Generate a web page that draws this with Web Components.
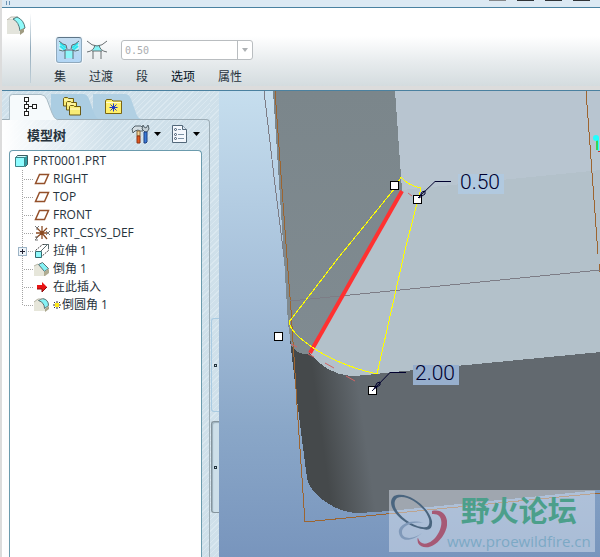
<!DOCTYPE html>
<html lang="zh-CN">
<head>
    <meta charset="UTF-8">
    <title>PRT0001</title>
    <style>
        html, body {
            margin: 0;
            height: 100%;
        }

        body {
            font: 12px/18px "Open Sans", "Noto Sans CJK SC", sans-serif;
            color: #26323c;
            background: #dcdcdc;
        }
    </style>
</head>
<body>
<cad-window></cad-window>

<template id="cad-window">
    <style>
        :host {
            display: flex;
            flex-direction: column;
            min-height: 100vh;
            box-sizing: border-box;
            padding-left: 2px;
        }

        main {
            display: flex;
            flex: 1;
            min-height: 0;
        }

        model-viewport {
            flex: 1;
            min-width: 0;
        }
    </style>
    <tool-strip></tool-strip>
    <feature-ribbon></feature-ribbon>
    <main>
        <side-panel></side-panel>
        <panel-sashes></panel-sashes>
        <model-viewport></model-viewport>
    </main>
</template>

<template id="tool-strip">
    <style>
        :host {
            display: flex;
            justify-content: space-between;
            height: 7px;
            padding: 0 10px 0 4px;
            background: #dce9f3;
            border-bottom: 1px solid #4a81a0;
        }

        .grip {
            width: 4px;
            height: 4px;
            margin-top: 1px;
            background: repeating-linear-gradient(90deg, #6b93b4 0 1px, transparent 1px 3px);
        }

        .keys {
            display: flex;
            gap: 11px;
        }

        .keys i {
            width: 17px;
            height: 1px;
            background: #303438;
        }

        .keys i:first-child {
            background: #85878a;
        }
    </style>
    <span class="grip"></span>
    <span class="keys"><i></i><i></i><i></i><i></i></span>
</template>

<template id="feature-ribbon">
    <style>
        :host {
            display: flex;
            height: 78px;
            background: linear-gradient(#fff 0 36%, #e8ecee 68%, #d4dcdf) content-box #eaf1f4;
            border-bottom: 1px solid #4a81a0;
            padding-bottom: 4px;
        }

        .feature {
            box-sizing: border-box;
            width: 28px;
            padding: 8px 0 0 4px;
        }

        .rule {
            width: 1px;
            margin: 5px 0 3px;
            background: linear-gradient(#fff, #8fa9ba 50%, #c2d0d9);
        }

        .dash {
            display: flex;
            flex-direction: column;
            padding: 29px 0 0 23px;
        }

        .row {
            display: flex;
            align-items: center;
            height: 28px;
            padding-left: 2px;
        }

        button {
            font: inherit;
            color: inherit;
            border: 0;
            padding: 0;
            background: none;
        }

        .tool {
            display: flex;
            align-items: center;
            justify-content: center;
            box-sizing: border-box;
            width: 26px;
            height: 26px;
            margin-right: 2px;
        }

        .tool[aria-pressed=true] {
            border: 1px solid #8fa9bd;
            border-top-color: #5e7587;
            border-radius: 3px;
            background: linear-gradient(#c3dcf0, #b2d6f5);
            box-shadow: 0 0 0 1px #f4f9fc;
        }

        value-combo {
            margin-left: 9px;
        }

        nav {
            display: flex;
            gap: 23px;
            margin-top: 5px;
        }

        nav .on {
            color: #00101c;
        }
    </style>
    <div class="feature"><ui-icon name="round" size="20"></ui-icon></div>
    <span class="rule"></span>
    <div class="dash">
        <div class="row">
            <button class="tool" aria-pressed="true" aria-label="集模式"><ui-icon name="sets" size="22"></ui-icon></button>
            <button class="tool" aria-pressed="false" aria-label="过渡模式"><ui-icon name="transition" size="22"></ui-icon></button>
            <value-combo value="0.50" label="半径"></value-combo>
        </div>
        <nav>
            <button>集</button>
            <button>过渡</button>
            <button>段</button>
            <button class="on">选项</button>
            <button>属性</button>
        </nav>
    </div>
</template>

<template id="value-combo">
    <style>
        :host {
            display: flex;
            box-sizing: border-box;
            width: 132px;
            height: 20px;
            border: 1px solid #b9bdc0;
            border-radius: 3px;
            background: #fff;
        }

        input {
            flex: 1;
            min-width: 0;
            border: 0;
            padding: 0 3px;
            background: none;
            font: 10px "DejaVu Sans Mono", monospace;
            color: #aaadb0;
        }

        button {
            width: 15px;
            border: 0;
            border-left: 1px solid #b9bdc0;
            padding: 0;
            background: none;
            display: flex;
            align-items: center;
            justify-content: center;
        }
    </style>
    <input disabled>
    <button disabled aria-label="展开"><svg width="6" height="4"><path d="M0 0h6L3 4z" fill="#adb1b4"/></svg></button>
</template>

<template id="side-panel">
    <style>
        :host {
            display: flex;
            flex-direction: column;
            width: 208px;
            background: repeating-linear-gradient(135deg, #cfe0ea 0 3px, #dae8f0 3px 4px);
        }

        .tabs {
            display: flex;
            padding: 3px 0 0 7px;
        }

        .tabs button {
            position: relative;
            width: 42px;
            height: 25px;
            border: 0;
            padding: 0;
            background: none;
        }

        .tabs svg {
            position: absolute;
            left: 0;
            top: 0;
            overflow: visible;
        }

        .tabs ui-icon {
            position: relative;
            margin-top: 2px;
        }

        .tabs button:nth-child(1) {
            z-index: 2;
        }

        .tabs button:nth-child(2) {
            z-index: 1;
        }

        .panel {
            display: flex;
            flex-direction: column;
            flex: 1;
            border: 1px solid #9cacb5;
            border-width: 1px 1px 0 0;
            border-radius: 0 4px 0 0;
            background: linear-gradient(90deg, #fff, rgba(255, 255, 255, 0) 52%);
        }

        header {
            display: flex;
            align-items: center;
            height: 30px;
            padding: 0 9px 0 25px;
        }

        h2 {
            flex: 1;
            margin: 0;
            font-size: 13px;
            line-height: 18px;
        }

        .menu {
            display: flex;
            align-items: center;
            gap: 4px;
            border: 0;
            padding: 0 0 3px;
            margin-left: 10px;
            background: none;
        }

        model-tree {
            flex: 1;
            margin: 0 7px;
        }
    </style>
    <div class="tabs" role="tablist">
        <button role="tab" aria-selected="true" aria-label="模型树">
            <svg width="55" height="26"><path d="M.5 26V3q0-2.500 3-2.500H32q4 0 6 5L43 19q2 6 6 7" fill="#f6fafc" stroke="#a9bbc5"/></svg>
            <ui-icon name="hierarchy" size="20"></ui-icon></button>
        <button role="tab" aria-label="文件夹浏览器">
            <svg width="55" height="26"><path d="M0 25V0H32q4 0 6 5L43 19q2 6 6 6" fill="#abcde2"/></svg>
            <ui-icon name="folders" size="20"></ui-icon></button>
        <button role="tab" aria-label="收藏夹">
            <svg width="55" height="26"><path d="M0 25V0H32q4 0 6 5L43 19q2 6 6 6" fill="#b1d0e3"/></svg>
            <ui-icon name="favorites" size="20"></ui-icon></button>
    </div>
    <section class="panel">
        <header>
            <h2>模型树</h2>
            <button class="menu" aria-label="设置"><ui-icon name="tools" size="20"></ui-icon><svg width="7" height="4"><path d="M0 0h7L3.500 4z"/></svg></button>
            <button class="menu" aria-label="显示"><ui-icon name="list" size="18"></ui-icon><svg width="7" height="4"><path d="M0 0h7L3.500 4z"/></svg></button>
        </header>
        <model-tree>
            <tree-row icon="part" root>PRT0001.PRT</tree-row>
            <tree-row icon="plane">RIGHT</tree-row>
            <tree-row icon="plane">TOP</tree-row>
            <tree-row icon="plane">FRONT</tree-row>
            <tree-row icon="csys">PRT_CSYS_DEF</tree-row>
            <tree-row icon="extrude" expandable>拉伸 1</tree-row>
            <tree-row icon="chamfer">倒角 1</tree-row>
            <tree-row icon="insert">在此插入</tree-row>
            <tree-row icon="fillet" last><ui-icon slot="mark" name="pending" size="9"></ui-icon>倒圆角 1</tree-row>
        </model-tree>
    </section>
</template>

<template id="model-tree">
    <style>
        :host {
            display: block;
            border: 1px solid #6b9bad;
            border-bottom: 0;
            border-radius: 4px 4px 0 0;
            padding-top: 1px;
            background: #fff;
        }
    </style>
    <slot></slot>
</template>

<template id="tree-row">
    <style>
        :host {
            display: flex;
            align-items: center;
            height: 18px;
            padding-left: 7px;
            white-space: nowrap;
        }

        :host([root]) {
            padding-left: 4px;
        }

        :host([root]) .rail {
            display: none;
        }

        .rail {
            flex: none;
        }

        .main {
            margin-right: 3px;
        }
    </style>
    <svg class="rail" width="17" height="18" shape-rendering="crispEdges"></svg>
    <ui-icon class="main" size="16"></ui-icon>
    <slot name="mark"></slot>
    <span><slot></slot></span>
</template>

<template id="panel-sashes">
    <style>
        :host {
            display: flex;
            flex-direction: column;
            align-items: flex-end;
            justify-content: flex-end;
            gap: 9px;
            box-sizing: border-box;
            width: 9px;
            padding-bottom: 44px;
            background: repeating-linear-gradient(135deg, #cfe0ea 0 3px, #dae8f0 3px 4px);
        }

        button {
            display: flex;
            align-items: center;
            justify-content: center;
            box-sizing: border-box;
            width: 8px;
            height: 94px;
            padding: 0;
            border: 1px solid #a9cbe2;
            border-right: 0;
            border-radius: 3px 0 0 3px;
            background: none;
        }

        button.open {
            height: 92px;
            border-color: #84949d;
            box-shadow: inset 1px 1px 1px #9cb0bc;
            background: #cddfe9;
        }

        button::before {
            content: "";
            width: 1px;
            height: 1px;
            border: 1px solid #24343e;
        }
    </style>
    <button aria-label="折叠导航器"></button>
    <button class="open" aria-label="折叠浏览器"></button>
</template>

<template id="model-viewport">
    <style>
        :host {
            display: block;
            position: relative;
            overflow: hidden;
            background: linear-gradient(#c6deee, #a3bdd8 45%, #8aa7c8 72%, #7895bd);
        }

        .scene {
            position: absolute;
            width: 100%;
            height: 100%;
        }

        forum-mark {
            position: absolute;
            right: 5px;
            bottom: 5px;
        }

        .dim {
            font: 300 21px Roboto, sans-serif;
            fill: #00002e;
        }
    </style>
    <svg class="scene" viewBox="219 91 381 466" preserveAspectRatio="xMinYMin slice">
        <defs>
            <linearGradient id="front" gradientUnits="userSpaceOnUse" x1="322" y1="440" x2="365" y2="434">
                <stop offset="0" stop-color="#45494b"/>
                <stop offset="1" stop-color="#62696f"/>
            </linearGradient>
            <linearGradient id="side" x1="0" y1="0" x2="0" y2="1">
                <stop offset="0" stop-color="#7b868b"/>
                <stop offset="1" stop-color="#808b91"/>
            </linearGradient>
        </defs>
        <!-- solid faces -->
        <g shape-rendering="crispEdges">
            <path d="M290 340L297 400 302 440 307 478Q309 487 317 495Q337 513 359 513L389 511 600 490V340L400 340z" fill="url(#front)"/>
            <path d="M395 91H601V352L384 373Q360 376 350 376C332 374 321 366 309 353L402 190z" fill="#b3c1ca"/>
            <path d="M395 91H601V170L402 190z" fill="#b8c5d0"/>
            <path d="M273 91H395L402 190 309 354Q297 355 291 345L288 323 284 258 277 152z" fill="url(#side)"/>
        </g>
        <!-- datum planes -->
        <g fill="none" stroke="#9d6530" shape-rendering="crispEdges">
            <path d="M275 91L287 258 291 310 298 420 305 522 600 493"/>
            <path d="M586 91L598 254M599 264v8"/>
            <path d="M264 91L275 185 284 257M290 301L600 270" stroke="#7d7d86"/>
        </g>
        <!-- round preview -->
        <path d="M291 344l6 3M308 354l6 3M325 363l9 5M346 376l9 5M408 193l4 3" stroke="#d46464" fill="none"/>
        <path d="M402 191L310 353" stroke="#ff3131" stroke-width="4"/>
        <path d="M401 177L395 188 339 257 289 322Q290 331 309 345Q337 365 377 374L405 250 421 188Q409 186 401 177z"
              fill="none" stroke="#ff0" shape-rendering="crispEdges"/>
        <!-- drag handles -->
        <g fill="#fff" stroke="#000" shape-rendering="crispEdges">
            <path d="M390.500 181.500h8v8h-8zM413.500 195.500h8v8h-8zM274.500 332.500h8v8h-8zM368.500 386.500h8v8h-8z"/>
        </g>
        <g stroke="#00002e" fill="none">
            <path d="M418 198L435 181.500H451M372 391L390 372.500H406"/>
            <path d="M419 198l3-6 3-1v3l-6 4M374 389l3-6 3-1v3l-6 4"/>
        </g>
        <path d="M597 140v10" stroke="#39d353" stroke-width="2"/>
        <path d="M598.500 138v13" stroke="#2ff" fill="none"/>
        <circle cx="596" cy="138" r="3" fill="#2ff"/>
        <path d="M598 151.500h3" stroke="#c33"/>
        <path d="M458 174h46v20h-46z" fill="#b1c9df"/>
        <path d="M413 365h46v20h-46z" fill="#97afcd"/>
        <text class="dim" x="460" y="189">0.50</text>
        <text class="dim" x="415" y="380">2.00</text>
    </svg>
    <forum-mark></forum-mark>
</template>

<template id="forum-mark">
    <style>
        :host {
            display: flex;
            box-sizing: border-box;
            width: 206px;
            height: 62px;
            background: rgba(220, 228, 240, .5);
        }

        svg {
            flex: none;
        }

        div {
            display: flex;
            flex-direction: column;
            align-items: flex-end;
            flex: 1;
            padding: 0 5px 0 0;
        }

        strong {
            font: 700 29px/38px "Noto Sans CJK SC", sans-serif;
            color: #4c9f8b;
            padding-right: 14px;
        }

        a {
            font: 15px/20px "Open Sans", sans-serif;
            color: #7ca9c5;
            text-decoration: none;
            margin-top: 3px;
        }
    </style>
    <svg width="58" height="62" fill-rule="evenodd">
        <path d="M5 6C17 0 39 15 43 31Q44 42 34 39C16 37-6 16 5 6zM8 8C-1 16 17 35 33 37Q42 39 40 29C36 16 17 3 8 8z" fill="#4a657f"/>
        <path d="M43 21C57 18 62 32 55 44C47 58 34 61 29 53Q28 48 29 48C32 58 44 54 50 42C55 31 52 23 43 24z" fill="#a65975"/>
        <path d="M35 33C20 28 8 36 10 43C12 53 24 51 33 43C26 49 14 50 13 43C12 36 24 31 35 33z" fill="#8099b9"/>
    </svg>
    <div>
        <strong>野火论坛</strong>
        <a href="#">www.proewildfire.cn</a>
    </div>
</template>

<script type="text/javascript">
    // every icon is [viewBox size, markup]
    const ICONS = {
        round: [20, `<path d="M1 4l4-3h7l-3 3z" fill="#f3f3ec" stroke="#bbb9ae"/>
            <path d="M1 4h6q7 3 7 14H1z" fill="#e3e4dc"/>
            <path d="M7 3l4-2q7 3 8 11l-5 3Q13 6 7 3z" fill="#8ffafa" stroke="#4f7678"/>
            <path d="M14 14l4-2v4l-4 3z" fill="#a09c82"/>`],
        sets: [22, `<path d="M1 3q4 4 7 4v4q-5 2-7 1zM21 3q-4 4-7 4v4q5 2 7 1z" fill="#bff3f8"/>
            <path d="M2 4l6 5M2 7l5 4M20 4l-6 5M20 7l-5 4" stroke="#2ee3ee" stroke-width="2"/>
            <path d="M7 12h8v7H7z" fill="#8cf6fa"/>
            <path d="M1 2q4 4 7 4l1 4M21 2q-4 4-7 4l-1 4M1 11q4 2 7 0M21 11q-4 2-7 0M7 11h8M7 12v8M15 12v8" fill="none" stroke="#596c73"/>`],
        transition: [22, `<path d="M8 6h6q0 4 2 6H6q2-2 2-6z" fill="#86f3f6"/>
            <path d="M1 2q5 5 10 5t10-5M1 13q7-1 8-7M21 13q-7-1-8-7M6 12h10M7 12v8M15 12v8" fill="none" stroke="#6a7072"/>`],
        hierarchy: [20, `<g fill="#fff" stroke="#222" shape-rendering="crispEdges">
            <path d="M4.500 1.500h4v4h-4zM4.500 8.500h4v4h-4zM4.500 15.500h4v4h-4zM12.500 8.500h4v4h-4zM6.500 5.500v3M6.500 12.500v3M8.500 10.500h4"/></g>`],
        folders: [20, `<g fill="#f8ec76" stroke="#6b5a14">
            <path d="M1.500 10V2.500l1-1h3l1 1h5V10z"/>
            <path d="M4.500 14V6.500l1-1h3l1 1h5V14z"/>
            <path d="M7.500 19v-8.500l1-1h3l1 1h6V19z"/></g>
            <path d="M8 13h10M5 8h8M2 4h8" stroke="#fffbd0"/>`],
        favorites: [20, `<path d="M1.500 17.500V5l1-1.500h5L9 5h8.500v12.500z" fill="#fff06b" stroke="#7a6512"/>
            <path d="M2 6.500h15" stroke="#fffbd0"/>
            <path d="M5.500 11.500h8M9.500 7.500v8M6.500 8.500l6 6M12.500 8.500l-6 6" stroke="#1a36c8"/>`],
        tools: [20, `<path d="M2 5l3-3h6l2 2v3h-3l-2-1-3 1-2 2z" fill="#d3dde2" stroke="#526068"/>
            <path d="M7 7h3v5H7z" fill="#f2d59c" stroke="#8c6a3c"/>
            <path d="M7 12h3v7H7z" fill="#e2571f" stroke="#8e3413"/>
            <path d="M13 1l-1 4 3 3h2l2-3-1-4-2 3-2-1z" fill="#c3ced4" stroke="#526068"/>
            <path d="M14 8h3v10l-1 1h-2z" fill="#3978d6" stroke="#1b3f80"/>`],
        list: [18, `<path d="M1.500.500h10l4 4v13h-14z" fill="#f4f8fd" stroke="#53687a"/>
            <path d="M11.500.500v4h4" fill="#dce8f3" stroke="#53687a"/>
            <path d="M7 4.500h3M7 9.500h6M7 13.500h6" stroke="#7d93a6"/>
            <g fill="#fff" stroke="#3c536b"><circle cx="4.500" cy="4.500" r="1"/><circle cx="4.500" cy="9.500" r="1"/><circle cx="4.500" cy="13.500" r="1"/></g>`],
        part: [16, `<path d="M1.500 4.500l2-2h10v9l-2 2z" fill="#2f9ea3" stroke="#3d5c60"/>
            <path d="M2 4l2-1h9l-2 1z" fill="#d7ffff"/>
            <path d="M1.500 4.500h9v9h-9z" fill="#8ffcff" stroke="#3d8388"/>`],
        plane: [16, `<path d="M5.500 3.500h9l-4 9h-9z" fill="none" stroke="#94502a" stroke-width="1.500"/>`],
        csys: [16, `<path d="M8 8V1M8 8l5-5M8 8h5M8 8l5 6M8 8v6M8 8l-6 5M8 8H2M8 8L3 3" stroke="#8a4a22" stroke-width="1.300"/>
            <path d="M1 1l2 2 2-2M3 3v2M1 12h3l-3 3h3M12 6l4 4M16 6l-4 4" fill="none" stroke="#777"/>`],
        extrude: [16, `<path d="M1.500 7.500l7-6h6v6l-7 6" fill="#fff" stroke="#444" stroke-dasharray="2 1"/>
            <path d="M7 8l7-7M10 1.500h4.500V6" fill="none" stroke="#5b6c70"/>
            <path d="M1.500 8.500h6v6h-6z" fill="#8ff8fa" stroke="#356b70"/>`],
        chamfer: [16, `<path d="M0 5l3-2h4l4 9v3H0z" fill="#e6e6da"/>
            <path d="M4.500 3.500l4-2 6 6-4 3z" fill="#84f2f5" stroke="#5b7072"/>
            <path d="M10 11l5-3v4l-4 3h-1z" fill="#b0ac92"/>
            <path d="M0 5l4-2" stroke="#b7b6a7" fill="none"/>`],
        insert: [16, `<path d="M3 6h5V3l5 5-5 5v-3H3z" fill="#e81414"/>
            <path d="M3 10h5v3l5-5" fill="none" stroke="#8d0d0d"/>`],
        fillet: [16, `<path d="M0 5l3-3h4q4 3 4 12H0z" fill="#e6e6da"/>
            <path d="M4.500 3.500l4-2q6 1 6 7l-4 3q0-6-6-8z" fill="#84f2f5" stroke="#5b7072"/>
            <path d="M11 12l4-3v3l-4 3z" fill="#aaa68b"/>
            <path d="M0 5l4-3h5" stroke="#b7b6a7" fill="none"/>`],
        pending: [9, `<path d="M1 1l6 6M7 1L1 7M4 0v2M4 6v2M0 4h2M6 4h2" stroke="#333"/>
            <path d="M2 2h4v4H2z" fill="#ffe818"/>`]
    };

    class TemplateElement extends HTMLElement {
        constructor() {
            super();
            const tpl = document.getElementById(this.localName);
            this.attachShadow({mode: "open"}).appendChild(tpl.content.cloneNode(true));
        }
    }

    customElements.define("ui-icon", class extends HTMLElement {
        static observedAttributes = ["name", "size"];

        constructor() {
            super();
            this.attachShadow({mode: "open"});
        }

        attributeChangedCallback() {
            const icon = ICONS[this.getAttribute("name")];
            if (!icon) return;
            const [box, body] = icon;
            const size = this.getAttribute("size") || box;
            this.shadowRoot.innerHTML = `
                <style>:host { display: inline-block; flex: none; } svg { display: block; }</style>
                <svg width="${size}" height="${size}" viewBox="0 0 ${box} ${box}" aria-hidden="true">${body}</svg>`;
        }
    });

    customElements.define("value-combo", class extends TemplateElement {
        connectedCallback() {
            const input = this.shadowRoot.querySelector("input");
            input.value = this.getAttribute("value");
            input.setAttribute("aria-label", this.getAttribute("label"));
        }
    });

    customElements.define("tree-row", class extends TemplateElement {
        connectedCallback() {
            this.shadowRoot.querySelector(".main").setAttribute("name", this.getAttribute("icon"));

            const end = this.hasAttribute("last") ? 9 : 18;
            let rail = `<path d="M5.500 0V${end}M7 9.500h9" stroke="#a3a3a3" stroke-dasharray="1 1"/>`;
            if (this.hasAttribute("expandable")) {
                rail += `<rect x="1.500" y="5.500" width="8" height="8" rx="1" fill="#eef4f9" stroke="#9db4c6"/>
                    <path d="M3 9.500h5M5.500 7v5" stroke="#223"/>`;
            }
            this.shadowRoot.querySelector(".rail").innerHTML = rail;
        }
    });

    for (let name of ["model-tree", "forum-mark", "panel-sashes", "tool-strip", "feature-ribbon",
        "side-panel", "model-viewport", "cad-window"]) {
        customElements.define(name, class extends TemplateElement {});
    }
</script>
</body>
</html>
